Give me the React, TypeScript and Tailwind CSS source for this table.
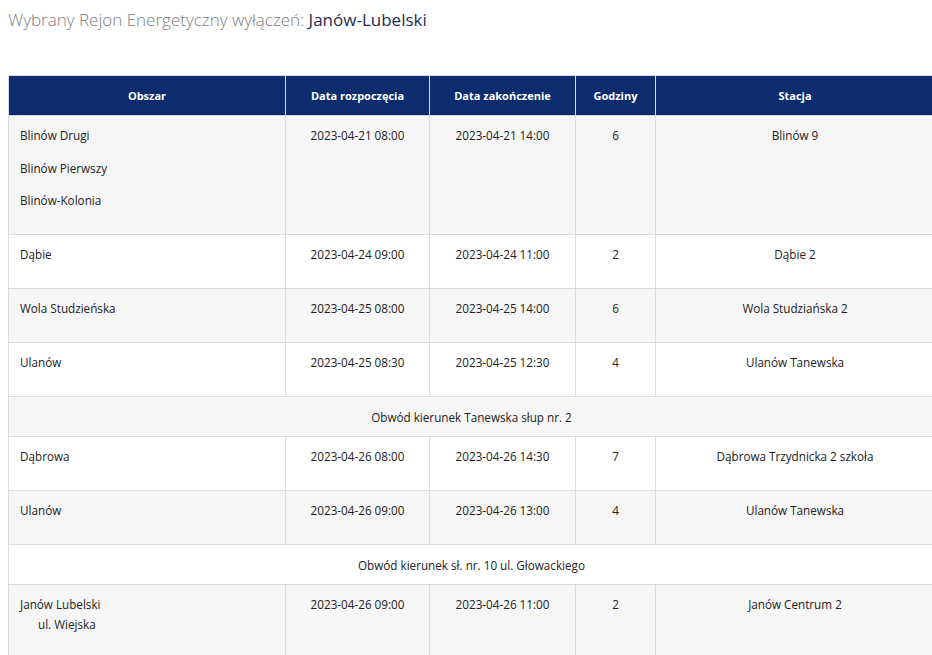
import React from 'react'

type Row =
  | { kind: 'data'; areas: React.ReactNode[]; start: string; end: string; hours: number; station: string }
  | { kind: 'note'; text: string }

const rows: Row[] = [
  {
    kind: 'data',
    areas: ['Blinów Drugi', 'Blinów Pierwszy', 'Blinów-Kolonia'],
    start: '2023-04-21 08:00',
    end: '2023-04-21 14:00',
    hours: 6,
    station: 'Blinów 9',
  },
  { kind: 'data', areas: ['Dąbie'], start: '2023-04-24 09:00', end: '2023-04-24 11:00', hours: 2, station: 'Dąbie 2' },
  {
    kind: 'data',
    areas: ['Wola Studzieńska'],
    start: '2023-04-25 08:00',
    end: '2023-04-25 14:00',
    hours: 6,
    station: 'Wola Studziańska 2',
  },
  { kind: 'data', areas: ['Ulanów'], start: '2023-04-25 08:30', end: '2023-04-25 12:30', hours: 4, station: 'Ulanów Tanewska' },
  { kind: 'note', text: 'Obwód kierunek Tanewska słup nr. 2' },
  {
    kind: 'data',
    areas: ['Dąbrowa'],
    start: '2023-04-26 08:00',
    end: '2023-04-26 14:30',
    hours: 7,
    station: 'Dąbrowa Trzydnicka 2 szkoła',
  },
  { kind: 'data', areas: ['Ulanów'], start: '2023-04-26 09:00', end: '2023-04-26 13:00', hours: 4, station: 'Ulanów Tanewska' },
  { kind: 'note', text: 'Obwód kierunek sł. nr. 10 ul. Głowackiego' },
  {
    kind: 'data',
    areas: [
      <>
        Janów Lubelski
        <br />
        <span className="pl-[18px]">ul. Wiejska</span>
      </>,
    ],
    start: '2023-04-26 09:00',
    end: '2023-04-26 11:00',
    hours: 2,
    station: 'Janów Centrum 2',
  },
]

const cell = 'border border-[#dddddd] pt-[9px] pb-[11.5px] px-[11px] align-top'

export default function App() {
  return (
    <div className="min-h-[655px] w-[932px] overflow-hidden bg-white text-[#222] font-['Open_Sans','Noto_Sans',sans-serif]">
      <h2 className="pl-2 pt-[7px] text-[17px] leading-[26px] font-light text-[#7b7d82]">
        Wybrany Rejon Energetyczny wyłączeń: <span className="font-normal text-[#1f2c50]">Janów-Lubelski</span>
      </h2>

      <table className="mt-[42px] ml-2 w-[926px] table-fixed border-collapse text-[11.7px] leading-[20px]">
        <colgroup>
          <col className="w-[277px]" />
          <col className="w-[144px]" />
          <col className="w-[146px]" />
          <col className="w-[80px]" />
          <col className="w-[279px]" />
        </colgroup>
        <thead>
          <tr className="bg-[#0b2c6f] text-white">
            {['Obszar', 'Data rozpoczęcia', 'Data zakończenie', 'Godziny', 'Stacja'].map((h) => (
              <th key={h} className="h-[40px] border border-[#d5dbe8] text-center text-[11px] font-bold">
                {h}
              </th>
            ))}
          </tr>
        </thead>
        <tbody>
          {rows.map((row, i) => {
            const bg = i % 2 === 0 ? 'bg-[#f6f6f6]' : 'bg-white'
            if (row.kind === 'note') {
              return (
                <tr key={i} className={bg}>
                  <td colSpan={5} className="border border-[#dddddd] pt-[10px] pb-[9px] text-center">
                    {row.text}
                  </td>
                </tr>
              )
            }
            return (
              <tr key={i} className={bg}>
                <td className={cell}>
                  {row.areas.map((a, j) => (
                    <p key={j} className="mb-[12.5px]">
                      {a}
                    </p>
                  ))}
                </td>
                <td className={cell + ' text-center'}>{row.start}</td>
                <td className={cell + ' text-center'}>{row.end}</td>
                <td className={cell + ' text-center'}>{row.hours}</td>
                <td className={cell + ' text-center'}>{row.station}</td>
              </tr>
            )
          })}
        </tbody>
      </table>
    </div>
  )
}
